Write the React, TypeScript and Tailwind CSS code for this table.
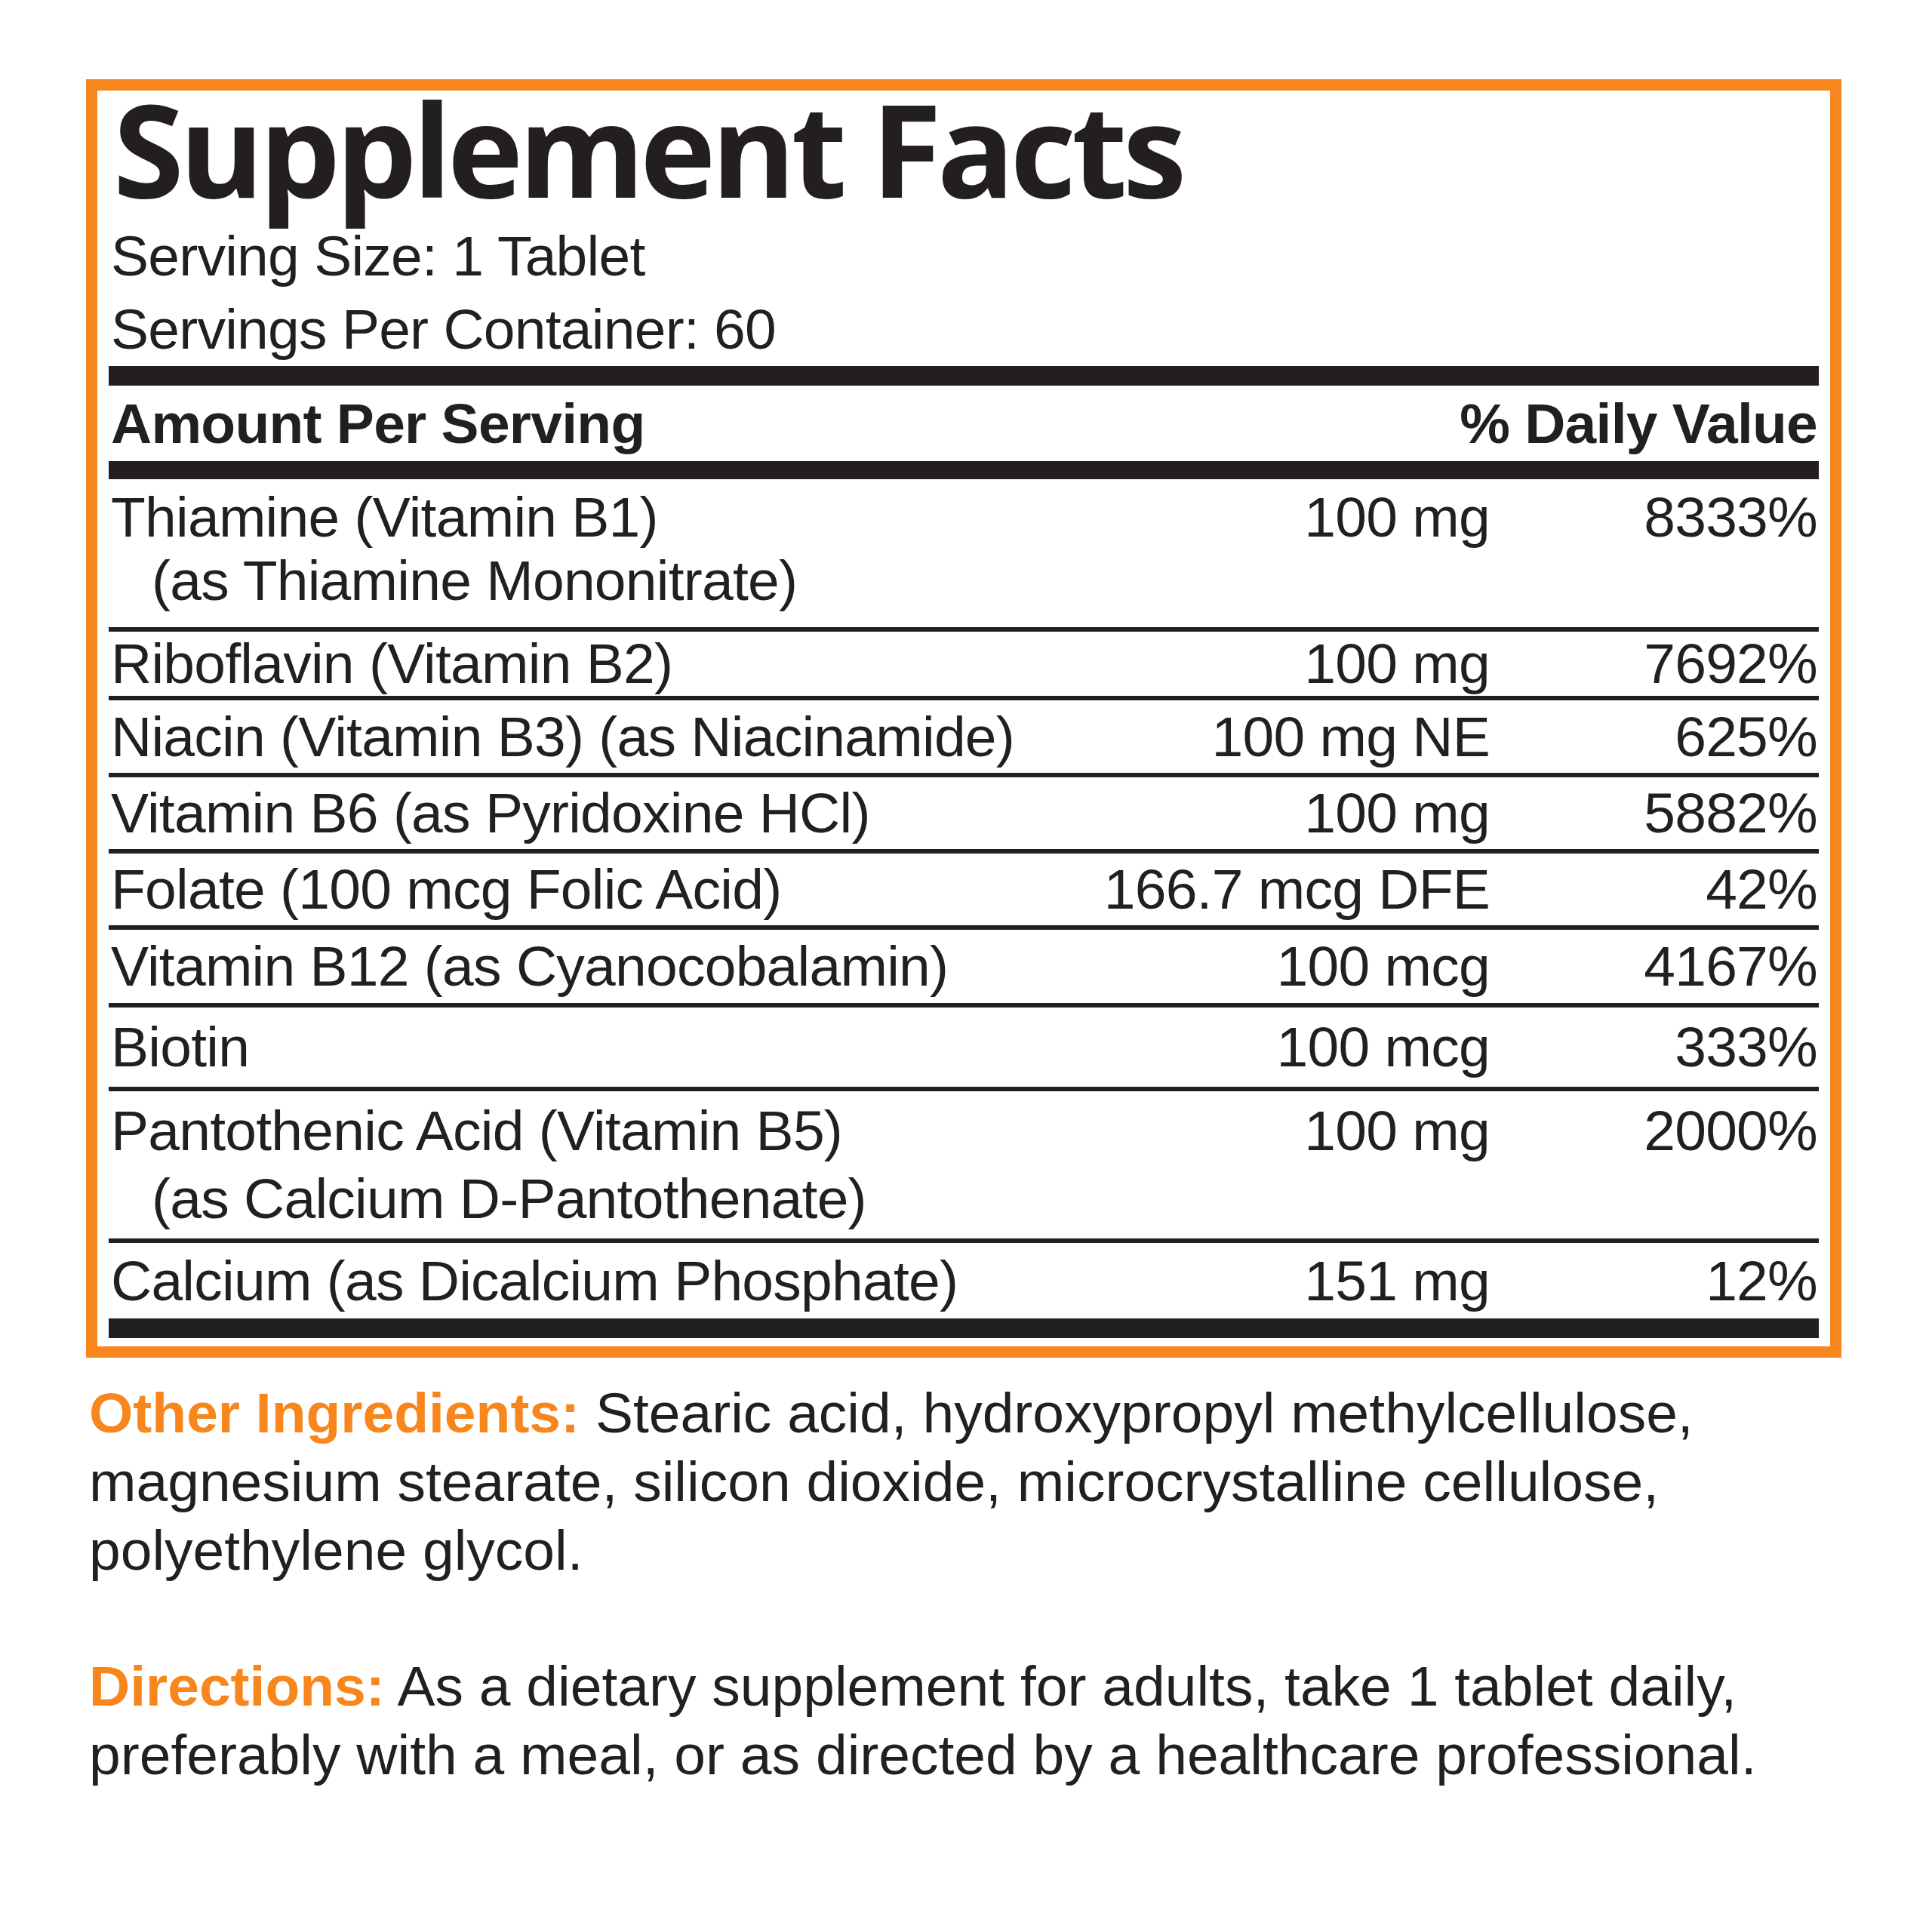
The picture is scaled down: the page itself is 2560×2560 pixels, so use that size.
import React from "react";

interface Nutrient {
  name: string;
  sub?: string;
  amount: string;
  dv: string;
  rowClass: string;
}

// row heights follow the printed label, which isn't perfectly even
const nutrients: Nutrient[] = [
  { name: "Thiamine (Vitamin B1)", sub: "(as Thiamine Mononitrate)", amount: "100 mg", dv: "8333%", rowClass: "pt-[8px] pb-[20px] leading-[84px]" },
  { name: "Riboflavin (Vitamin B2)", amount: "100 mg", dv: "7692%", rowClass: "leading-[85px]" },
  { name: "Niacin (Vitamin B3) (as Niacinamide)", amount: "100 mg NE", dv: "625%", rowClass: "leading-[96px]" },
  { name: "Vitamin B6 (as Pyridoxine HCl)", amount: "100 mg", dv: "5882%", rowClass: "leading-[95px]" },
  { name: "Folate (100 mcg Folic Acid)", amount: "166.7 mcg DFE", dv: "42%", rowClass: "leading-[95px]" },
  { name: "Vitamin B12 (as Cyanocobalamin)", amount: "100 mcg", dv: "4167%", rowClass: "leading-[97px]" },
  { name: "Biotin", amount: "100 mcg", dv: "333%", rowClass: "leading-[105px]" },
  { name: "Pantothenic Acid (Vitamin B5)", sub: "(as Calcium D-Pantothenate)", amount: "100 mg", dv: "2000%", rowClass: "pt-[7px] pb-[8px] leading-[90px]" },
  { name: "Calcium (as Dicalcium Phosphate)", amount: "151 mg", dv: "12%", rowClass: "leading-[100px]" },
];

const NutrientRow = ({ item }: { item: Nutrient }) => {
  return (
    <div className={`flex items-start pl-[3px] ${item.rowClass}`}>
      <div className="flex-1">
        <div>{item.name}</div>
        {item.sub && <div className="pl-[54px]">{item.sub}</div>}
      </div>
      <div className="w-[600px] text-right">{item.amount}</div>
      <div className="w-[436px] text-right pr-[2px]">{item.dv}</div>
    </div>
  );
};

export default function App() {
  return (
    <div className="w-[2560px] h-[2560px] bg-white text-[#231f20] font-['Liberation_Sans',Arial,sans-serif] text-[75px]">
      <div className="pt-[105px] pl-[114px] w-[2440px]">
        {/* label box */}
        <div className="border-[15px] border-[#f7861c] px-[15px] pb-[11px] tracking-[-0.01em]">
          <h1 className="font-['Open_Sans',sans-serif] font-bold text-[170px] leading-[152px] tracking-[-0.035em] pl-[6px]">
            Supplement Facts
          </h1>
          <div className="mt-[19px] leading-[97px] pl-[3px]">
            <div>Serving Size: 1 Tablet</div>
            <div>Servings Per Container: 60</div>
          </div>
          <div className="h-[26px] bg-[#231f20]" />
          <div className="flex justify-between font-bold leading-[100px] pl-[3px] pr-[2px]">
            <span>Amount Per Serving</span>
            <span>% Daily Value</span>
          </div>
          <div className="h-[24px] bg-[#231f20]" />
          {nutrients.map((item, idx) => (
            <div key={item.name}>
              {idx > 0 && <div className="h-[6px] bg-[#231f20]" />}
              <NutrientRow item={item} />
            </div>
          ))}
          <div className="h-[26px] bg-[#231f20]" />
        </div>

        {/* other ingredients + directions */}
        <div className="mt-[28px] pl-[4px] leading-[91px]">
          <p>
            <span className="font-bold text-[#f7861c]">Other Ingredients:</span> Stearic acid, hydroxypropyl methylcellulose,
            <br />
            magnesium stearate, silicon dioxide, microcrystalline cellulose,
            <br />
            polyethylene glycol.
          </p>
          <p className="mt-[89px]">
            <span className="font-bold text-[#f7861c]">Directions:</span> As a dietary supplement for adults, take 1 tablet daily,
            <br />
            preferably with a meal, or as directed by a healthcare professional.
          </p>
        </div>
      </div>
    </div>
  );
}
